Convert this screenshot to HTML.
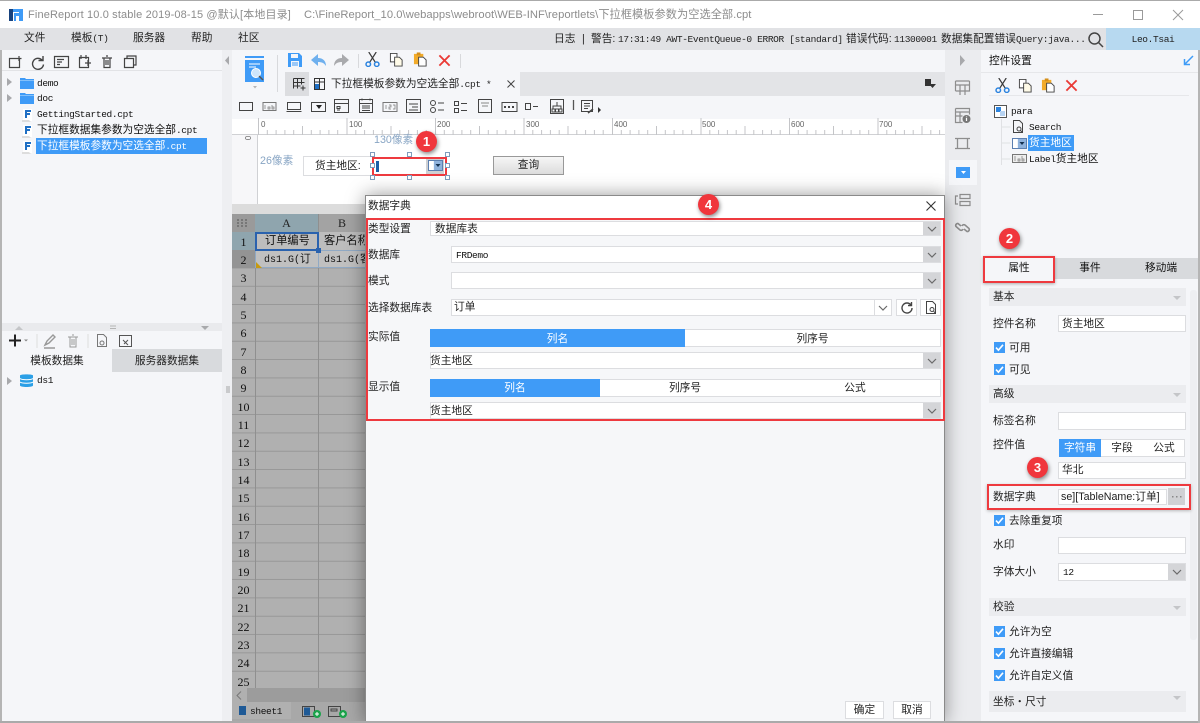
<!DOCTYPE html>
<html lang="zh"><head><meta charset="utf-8"><title>FineReport</title>
<style>
html,body{margin:0;padding:0}
body{width:1200px;height:723px;overflow:hidden;position:relative;background:#f5f6f9;font:10.7px/16px "Liberation Sans","Noto Sans CJK SC",sans-serif;color:#222}
.a{position:absolute;box-sizing:border-box}
.t{position:absolute;white-space:nowrap;line-height:16px;height:16px;font-family:"Liberation Sans","Noto Sans CJK SC",sans-serif;font-size:10.7px;color:#222}
.m{font-family:"Liberation Mono","Noto Sans CJK SC",monospace;font-size:9.5px;letter-spacing:-.35px}
.t.m{margin-top:1px}
.c{text-align:center}
.inp{position:absolute;box-sizing:border-box;background:#fff;border:1px solid #dcdde0}
.arr{position:absolute;background:#d4d5d8;right:0;top:0;bottom:0;width:17px}
.sec{position:absolute;left:989px;width:197px;background:#ebecef}
.num{position:absolute;left:232px;width:23px;text-align:center;font:12px/16px "Liberation Serif",serif;color:#111;height:16px}
.badge{position:absolute;width:21px;height:21px;border-radius:50%;background:#f0363c;color:#fff;font:bold 13px/21px "Liberation Sans",sans-serif;text-align:center;box-shadow:1px 2px 4px rgba(0,0,0,.45)}
.red{position:absolute;box-sizing:border-box;border:2px solid #ee3a3f}
.h{position:absolute;width:5px;height:5px;box-sizing:border-box;border:1px solid #7f9cbd;background:#fff}
.rl{font-size:8px;color:#666;top:117px}
svg{position:absolute;overflow:visible}
</style></head><body>
<svg width="0" height="0" style="position:absolute"><defs>
<symbol id="chev" viewBox="0 0 10 6"><path d="M1 1l4 4 4-4" fill="none" stroke="#6a6a6a" stroke-width="1.2"/></symbol>
<symbol id="chk" viewBox="0 0 11 11"><rect width="11" height="11" fill="#3f9bf7"/><path d="M2 5.6l2.4 2.6L9 2.8" fill="none" stroke="#fff" stroke-width="1.6"/></symbol>
<symbol id="cut" viewBox="0 0 16 16"><path d="M4 0l7 11M12 0L5 11" stroke="#3a3a3a" stroke-width="1.3" fill="none"/><circle cx="3.5" cy="13" r="2.4" fill="none" stroke="#2d84df" stroke-width="1.6"/><circle cx="12.5" cy="13" r="2.4" fill="none" stroke="#2d84df" stroke-width="1.6"/></symbol>
<symbol id="copy" viewBox="0 0 16 16"><path d="M1.500 1.500h7v9h-7z" fill="#fff" stroke="#444"/><path d="M6 5.500h5l3 3v6.500H6z" fill="#fffbe8" stroke="#444"/></symbol>
<symbol id="paste" viewBox="0 0 16 16"><path d="M1 2h10v11H1z" fill="#f2ab2a"/><path d="M4 0.500h4v3H4z" fill="#d68f18"/><path d="M6 5.500h5l3 3v6.500H6z" fill="#fff" stroke="#444"/></symbol>
<symbol id="del" viewBox="0 0 14 14"><path d="M1.500 1.500l11 11M12.500 1.500l-11 11" stroke="#ea3a36" stroke-width="2" fill="none"/></symbol>
<symbol id="fi" viewBox="0 0 12 14"><path d="M1 1h9v12H1z" fill="#fff"/><path d="M3 2h6v2H5v1h3v2H5v3H3z" fill="#1f6fc4"/><path d="M0 12h7l2 2H0z" fill="#ddd"/></symbol>
<symbol id="folder" viewBox="0 0 14 12"><path d="M0 1h5l1 1h8v10H0z" fill="#3f9bf7"/><path d="M0 3h14v1H0z" fill="#83c0fa"/></symbol>
<pattern id="tk" x="26" width="88.5" height="18" patternUnits="userSpaceOnUse"><path d="M.5 0v17M9.300 12v5M18.100 12v5M26.900 12v5M35.700 12v5M44.500 8v9M53.300 12v5M62.100 12v5M70.900 12v5M79.700 12v5" stroke="#c4c5c8" fill="none"/></pattern>
<pattern id="rw" y="250" width="10" height="18.33" patternUnits="userSpaceOnUse"><rect y="17.600" width="10" height="1.300" fill="#8f8f8f"/></pattern>
</defs></svg>

<!-- window frame / title bar -->
<div class="a" style="left:0;top:0;width:1200px;height:28px;background:#fff;border-top:1px solid #aaa"></div>
<svg style="left:9px;top:8px" width="14" height="14" viewBox="0 0 14 14"><path d="M0 1h4v12H0z" fill="#17427e"/><path d="M4 1h10v12h-4V8H7v5H5V5h5V4H4z" fill="#3f9bf7"/></svg>
<div class="t" style="left:28px;top:7px;color:#8c8c8c;font-size:11px;letter-spacing:.14px">FineReport 10.0 stable 2019-08-15 @默认[本地目录]</div>
<div class="t" style="left:304px;top:7px;color:#8c8c8c;font-size:11.2px;letter-spacing:.05px">C:\FineReport_10.0\webapps\webroot\WEB-INF\reportlets\下拉框模板参数为空选全部.cpt</div>
<svg style="left:1093px;top:9px" width="95" height="12" fill="none" stroke="#9a9a9a"><path d="M0 5.500h10"/><rect x="40.500" y="1.500" width="9" height="9"/><path d="M80 1l10 10M90 1L80 11"/></svg>

<!-- menu bar -->
<div class="a" style="left:0;top:28px;width:1200px;height:22px;background:#e1e2e5"></div>
<div class="t" style="left:24px;top:30px">文件</div>
<div class="t" style="left:71px;top:30px">模板<span class="m">(T)</span></div>
<div class="t" style="left:133px;top:30px">服务器</div>
<div class="t" style="left:191px;top:30px">帮助</div>
<div class="t" style="left:238px;top:30px">社区</div>
<div class="t" style="left:554px;top:31px">日志</div><div class="t" style="left:582px;top:31px">|</div><div class="t" style="left:591px;top:31px">警告:</div>
<div class="t m" style="left:618px;top:31px">17:31:49 AWT-EventQueue-0 ERROR [standard]</div>
<div class="t" style="left:846px;top:31px">错误代码:</div><div class="t m" style="left:894px;top:31px">11300001</div>
<div class="t" style="left:941px;top:31px">数据集配置错误</div><div class="t m" style="left:1016px;top:31px">Query:java...</div>
<svg style="left:1088px;top:32px" width="16" height="16" fill="none" stroke="#444" stroke-width="1.500"><circle cx="6.500" cy="6.500" r="5.500"/><path d="M10.500 10.500l4.500 4.500"/></svg>
<div class="a" style="left:1106px;top:28px;width:94px;height:22px;background:#b7d9f0"></div>
<div class="t m c" style="left:1106px;top:31px;width:94px">Leo.Tsai</div>

<!-- left panel -->
<div class="a" style="left:0;top:50px;width:2px;height:673px;background:#b5b5b5"></div>
<svg style="left:8px;top:54px" width="130" height="16" fill="none" stroke="#444" stroke-width="1.200">
<path d="M1.500 4.500h10v9h-10zM11 2v5M8.500 4.500h5"/>
<path d="M34 6a5.500 5.500 0 1 0 1.500 4.500M35 2v4.500h-4.500" stroke-width="1.400"/>
<path d="M46.500 2.500h14v11h-14zM49 5.500h7M49 8h5M49 10.500h3"/>
<path d="M71.500 3.500h9v10h-9zM73 1v4M78 1v4M77 9h6M80 6v6"/>
<path d="M94 4h10M96 4v9.500h6V4M98 2h2M98 6v5M100 6v5"/>
<path d="M116.500 4.500h9v9h-9zM119 4V2h9v9h-2"/>
</svg>
<div class="a" style="left:2px;top:70px;width:220px;height:1px;background:#e2e3e6"></div>
<svg style="left:7px;top:78px" width="6" height="25" fill="#a8a9ac"><path d="M0 0l5 4-5 4zM0 16l5 4-5 4z"/></svg>
<svg style="left:20px;top:77px" width="14" height="12"><use href="#folder"/></svg>
<svg style="left:20px;top:92px" width="14" height="12"><use href="#folder"/></svg>
<div class="t m" style="left:37px;top:75px;color:#111">demo</div>
<div class="t m" style="left:37px;top:90px;color:#111">doc</div>
<svg style="left:22px;top:108px" width="12" height="14"><use href="#fi"/></svg>
<svg style="left:22px;top:124px" width="12" height="14"><use href="#fi"/></svg>
<svg style="left:22px;top:140px" width="12" height="14"><use href="#fi"/></svg>
<div class="t m" style="left:37px;top:106px;color:#111">GettingStarted.cpt</div>
<div class="t" style="left:37px;top:122px;color:#111">下拉框数据集参数为空选全部<span class="m">.cpt</span></div>
<div class="a" style="left:36px;top:138px;width:171px;height:16px;background:#3f9bf7"></div>
<div class="t" style="left:37px;top:138px;color:#fff">下拉框模板参数为空选全部<span class="m">.cpt</span></div>

<div class="a" style="left:2px;top:323px;width:220px;height:8px;background:#e9eaed"></div>
<svg style="left:15px;top:325px" width="200" height="6"><path d="M0 5l4-4 4 4z" fill="#c4c5c8"/><path d="M95 1h6M95 3.500h6" stroke="#b5b5b5"/><path d="M186 1h8l-4 4z" fill="#a8a9ac"/></svg>
<svg style="left:8px;top:333px" width="130" height="16" fill="none" stroke="#aaa">
<path d="M1 7.500h12M7 1.500v12" stroke="#222" stroke-width="2"/><path d="M16 6.500h4l-2 2z" fill="#888" stroke="none"/>
<path d="M29 1v14" stroke="#ddd"/><path d="M37 12l2-4 6-6 2 2-6 6zM36 15h11" stroke="#999" stroke-width="1.400"/>
<path d="M60 4h10M62 4v10h6V4M64 2h2M64 6v6M66 6v6" stroke="#999"/><path d="M80 1v14" stroke="#ddd"/>
<path d="M89.500 1.500h6l3 3v9h-9z" stroke="#777"/><circle cx="94" cy="10" r="2" stroke="#777"/>
<path d="M111.500 2.500h12v11h-12zM115 7l5 5M120 7l-4 4" stroke="#555"/>
</svg>
<div class="a" style="left:2px;top:349px;width:110px;height:23px;background:#f5f6f9"></div>
<div class="a" style="left:112px;top:349px;width:110px;height:23px;background:#d8dadd"></div>
<div class="t c" style="left:2px;top:353px;width:110px">模板数据集</div>
<div class="t c" style="left:112px;top:353px;width:110px">服务器数据集</div>
<svg style="left:7px;top:377px" width="6" height="9" fill="#a8a9ac"><path d="M0 0l5 4-5 4z"/></svg>
<svg style="left:20px;top:373px" width="13" height="15"><path d="M0 2.500C0 1 13 1 13 2.500v10c0 2-13 2-13 0z" fill="#2b9fe6"/><path d="M0 5.500c2 1.600 11 1.600 13 0M0 9c2 1.600 11 1.600 13 0" stroke="#fff" fill="none"/></svg>
<div class="t m" style="left:37px;top:372px;color:#111">ds1</div>

<!-- splitter -->
<div class="a" style="left:222px;top:50px;width:10px;height:673px;background:#eeeff2"></div>
<svg style="left:225px;top:56px" width="5" height="10"><path d="M4 0v9L0 4.500z" fill="#a8a9ac"/></svg>
<div class="a" style="left:226px;top:386px;width:4px;height:7px;background:#c9cacc"></div>

<!-- centre toolbar -->
<div class="a" style="left:232px;top:50px;width:713px;height:46px;background:#f5f6f9"></div>
<svg style="left:245px;top:56px" width="20" height="36"><rect x="0" y="0" width="19" height="2" fill="#3f9bf7"/><path d="M0 4h19v22H0z" fill="#3f9bf7"/><path d="M4 8h11M4 11h7" stroke="#fff"/><circle cx="11" cy="17" r="4.500" fill="#cfe6fb" stroke="#fff"/><path d="M14 20l4 4" stroke="#555" stroke-width="1.500"/><path d="M8 30h4l-2 2.500z" fill="#b5b5b5"/></svg>
<div class="a" style="left:277px;top:55px;width:1px;height:37px;background:#d8d9dc"></div>
<svg style="left:288px;top:53px" width="14" height="14"><path d="M0 0h11l3 3v11H0z" fill="#3f9bf7"/><path d="M3 1h7v4H3zM3 8h8v6H3z" fill="#f5f6f9"/><path d="M4 10h6M4 12h6" stroke="#3f9bf7"/></svg>
<svg style="left:311px;top:53px" width="40" height="15"><path d="M7 1L0 7l7 6V9c4 0 6 1 8 4 0-5-3-8-8-8z" fill="#6fb0ee"/><path d="M31 1l7 6-7 6V9c-4 0-6 1-8 4 0-5 3-8 8-8z" fill="#a9aaad"/></svg>
<div class="a" style="left:358px;top:54px;width:1px;height:14px;background:#d8d9dc"></div>
<svg style="left:365px;top:52px" width="15" height="15"><use href="#cut"/></svg>
<svg style="left:389px;top:52px" width="15" height="15"><use href="#copy"/></svg>
<svg style="left:413px;top:52px" width="15" height="15"><use href="#paste"/></svg>
<svg style="left:438px;top:54px" width="13" height="13"><use href="#del"/></svg>
<div class="a" style="left:460px;top:54px;width:1px;height:14px;background:#d8d9dc"></div>

<!-- tab row -->
<div class="a" style="left:285px;top:72px;width:660px;height:24px;background:#e3e4e7"></div>
<div class="a" style="left:285px;top:72px;width:24px;height:24px;background:#dcdde0"></div>
<div class="a" style="left:309px;top:72px;width:211px;height:24px;background:#f5f6f9"></div>
<svg style="left:293px;top:78px" width="13" height="13" fill="none" stroke="#333"><path d="M.5 .5h11M.5 .5v10M4.500 .5v10M8.500 .5v6M.5 4.500h11M.5 8h7M10 7.500v5M7.500 10h5"/></svg>
<svg style="left:314px;top:78px" width="11" height="12"><path d="M.5 .5h10v11H.5zM.5 4h10M5.500 0v12" fill="none" stroke="#333"/><path d="M1 6h4v5H1z" fill="#1f6fc4"/></svg>
<div class="t" style="left:331px;top:76px">下拉框模板参数为空选全部<span class="m">.cpt *</span></div>
<svg style="left:507px;top:80px" width="8" height="8"><path d="M.5 .5l7 7M7.500 .5l-7 7" stroke="#444" fill="none"/></svg>
<svg style="left:925px;top:79px" width="11" height="10"><path d="M0 0h6v7H0z" fill="#333"/><path d="M4 5h7l-3.500 4z" fill="#333"/></svg>

<!-- widget toolbar -->
<svg style="left:239px;top:98px" width="360" height="18" fill="none" stroke="#444">
<rect x=".5" y="4.500" width="13" height="8"/>
<rect x="24" y="4.500" width="13" height="8" stroke="#777"/><path d="M26 7v4M29 9v2h2V9zM33 7v4h2V9h-2" stroke="#777" stroke-width=".7"/>
<path d="M48.500 4.500h13v7h-13zM47.500 13.500h15"/>
<path d="M72.500 4.500h14v9h-14z"/><path d="M77 7h6l-3 4z" fill="#222" stroke="none"/>
<path d="M95.500 1.500h14v13h-14zM95.500 5.500h14M98 8.500h3v2h-3zM98 12h3"/>
<path d="M120.500 1.500h13v13h-13zM120.500 5.500h13M123 8h8M123 10h8M123 12.500h8"/><path d="M123 .5v2M131 .5v2"/>
<rect x="144" y="4.500" width="14" height="9" stroke="#777"/><path d="M147 7v4M150 7h2v2h-2v2h2M154 7h2v4h-2" stroke="#777" stroke-width=".7"/>
<path d="M167.500 1.500h14v13h-14zM170 6h9M173 9h6M170 12h9"/>
<circle cx="194" cy="5" r="2.500"/><circle cx="194" cy="12" r="2.500"/><path d="M199 5h6M199 12h6"/>
<path d="M215.500 3.500h4v4h-4zM215.500 10.500h4v4h-4zM222 5.500h6M222 12.500h6"/>
<rect x="239.500" y="1.500" width="13" height="13"/><path d="M242 5h8M243 8h6" stroke="#888"/>
<rect x="263" y="4.500" width="15" height="9"/><path d="M265 9h2M269 9h2M273 9h2" stroke-width="2"/>
<path d="M286.500 5.500h5v6h-5zM294 8.500h5"/>
<rect x="311.500" y="1.500" width="13" height="14"/><path d="M318 4v4M314 11V8h8v3M313 11h3v3h-3zM316.500 11h3v3h-3zM320 11h3v3h-3z"/>
<path d="M334.500 2v10" stroke="#555" stroke-width="1.300"/>
<path d="M342.500 2.500h11v11h-11zM345 5.500h6M345 8h6M345 10.500h4"/><path d="M349 15l5-4" stroke-width="1.500"/>
<path d="M359 9l3 3-3 3z" fill="#333" stroke="none"/>
</svg>

<!-- ruler + param canvas -->
<div class="a" style="left:232px;top:119px;width:713px;height:16px;background:#fff;border-bottom:1px solid #d0d1d4"></div>
<svg style="left:232px;top:118px" width="713" height="18"><rect x="26" width="687" height="18" fill="url(#tk)"/></svg>
<div class="t rl" style="left:261px">0</div>
<div class="t rl" style="left:349px">100</div>
<div class="t rl" style="left:437px">200</div>
<div class="t rl" style="left:526px">300</div>
<div class="t rl" style="left:614px">400</div>
<div class="t rl" style="left:702px">500</div>
<div class="t rl" style="left:791px">600</div>
<div class="t rl" style="left:879px">700</div>
<div class="a" style="left:232px;top:135px;width:713px;height:70px;background:#fff"></div>
<div class="a" style="left:232px;top:135px;width:26px;height:70px;background:#f7f7f9;border-right:1px solid #d0d1d4"></div>
<div class="t" style="left:245px;top:130px;font-size:8px;color:#666;transform:rotate(90deg)">0</div>
<div class="a" style="left:232px;top:204px;width:713px;height:10px;background:#dcdcdc"></div>
<div class="t" style="left:374px;top:132px;color:#88a5c4;font-size:10.7px">130像素</div>
<div class="t" style="left:260px;top:153px;color:#88a5c4;font-size:10.7px">26像素</div>
<div class="a" style="left:303px;top:156px;width:69px;height:20px;background:#fff;border:1px solid #dcdde0;border-right:0"></div>
<div class="t" style="left:315px;top:158px">货主地区:</div>
<div class="a" style="left:376px;top:161px;width:3px;height:11px;background:#1f5fa8"></div>
<div class="a" style="left:426px;top:158px;width:18px;height:16px;background:#cfd0d3"></div>
<svg style="left:428px;top:160px" width="15" height="11"><rect x=".5" y=".5" width="14" height="10" fill="#dbe7f6" stroke="#5b7fb0"/><rect x="6" y="1" width="8" height="9" fill="#8fb2dc"/><path d="M7.500 4h5l-2.500 3z" fill="#13304f"/><rect x="1" y="1" width="4.500" height="9" fill="#fff"/></svg>
<div class="red" style="left:372px;top:157px;width:75px;height:19px"></div>
<div class="h" style="left:407px;top:152px"></div><div class="h" style="left:445px;top:152px"></div><div class="h" style="left:370px;top:152px"></div>
<div class="h" style="left:370px;top:163px"></div><div class="h" style="left:445px;top:163px"></div>
<div class="h" style="left:370px;top:175px"></div><div class="h" style="left:407px;top:175px"></div><div class="h" style="left:445px;top:175px"></div>
<div class="a" style="left:493px;top:156px;width:71px;height:19px;background:linear-gradient(#f6f6f6,#dcdcdc);border:1px solid #999"></div>
<div class="t c" style="left:493px;top:157px;width:71px">查询</div>

<!-- grid -->
<div class="a" style="left:232px;top:214px;width:133px;height:488px;background:#b0b0b0"></div>
<svg style="left:232px;top:214px" width="133" height="488" viewBox="232 214 133 488"><rect x="232" y="250" width="133" height="438" fill="url(#rw)"/><path d="M255.500 214v474M318.500 214v474" stroke="#8f8f8f"/></svg>
<div class="a" style="left:232px;top:214px;width:23px;height:18px;background:#9a9a9a"></div>
<div class="a" style="left:255px;top:214px;width:63px;height:18px;background:#8fa5ae"></div>
<div class="a" style="left:319px;top:214px;width:46px;height:18px;background:#a3a3a3"></div>
<svg style="left:237px;top:219px" width="12" height="8" fill="#777"><path d="M0 0h2v2H0zM4 0h2v2H4zM8 0h2v2H8zM0 3h2v2H0zM4 3h2v2H4zM8 3h2v2H8zM0 6h2v2H0zM4 6h2v2H4zM8 6h2v2H8z"/></svg>
<div class="t c" style="left:255px;top:215px;width:63px;font-family:'Liberation Serif',serif;font-size:12px">A</div>
<div class="t c" style="left:319px;top:215px;width:46px;font-family:'Liberation Serif',serif;font-size:12px">B</div>
<div class="a" style="left:232px;top:232px;width:23px;height:18px;background:#8fa5ae"></div>
<div class="a" style="left:232px;top:250px;width:23px;height:18px;background:#949494"></div>
<div class="a" style="left:255px;top:232px;width:110px;height:18px;background:#bdbdbd"></div>
<div class="a" style="left:255px;top:250px;width:110px;height:18px;background:#c0c0c0;border:1px solid #90a9c4;border-right:0"></div>
<div class="a" style="left:318px;top:250px;width:1px;height:18px;background:#90a9c4"></div>
<div class="t" style="left:265px;top:233px;color:#111;font-size:11.2px">订单编号</div>
<div class="t" style="left:324px;top:233px;width:41px;overflow:hidden;color:#111;font-size:11.2px">客户名称</div>
<div class="t" style="left:264px;top:251px;color:#111;width:54px;overflow:hidden"><span class="m" style="font-size:10px;letter-spacing:0">ds1.G(</span>订</div>
<div class="t" style="left:324px;top:251px;color:#111;width:41px;overflow:hidden"><span class="m" style="font-size:10px;letter-spacing:0">ds1.G(</span>客</div>
<svg style="left:256px;top:262px" width="6" height="6"><path d="M0 0l6 6H0z" fill="#c79a10"/></svg>
<div class="a" style="left:255px;top:232px;width:64px;height:19px;border:2px solid #2a62ae"></div>
<div class="a" style="left:316px;top:248px;width:5px;height:5px;background:#2a62ae"></div>
<div class="num" style="top:234px">1</div><div class="num" style="top:252px">2</div><div class="num" style="top:270px">3</div><div class="num" style="top:289px">4</div><div class="num" style="top:307px">5</div><div class="num" style="top:325px">6</div><div class="num" style="top:344px">7</div><div class="num" style="top:362px">8</div><div class="num" style="top:380px">9</div><div class="num" style="top:399px">10</div><div class="num" style="top:417px">11</div><div class="num" style="top:435px">12</div><div class="num" style="top:454px">13</div><div class="num" style="top:472px">14</div><div class="num" style="top:490px">15</div><div class="num" style="top:509px">16</div><div class="num" style="top:527px">17</div><div class="num" style="top:545px">18</div><div class="num" style="top:564px">19</div><div class="num" style="top:582px">20</div><div class="num" style="top:600px">21</div><div class="num" style="top:619px">22</div><div class="num" style="top:637px">23</div><div class="num" style="top:655px">24</div><div class="num" style="top:674px">25</div>
<div class="a" style="left:232px;top:688px;width:133px;height:14px;background:#9c9c9c"></div>
<div class="a" style="left:232px;top:688px;width:15px;height:14px;background:#b0b0b0"></div>
<svg style="left:236px;top:691px" width="6" height="9"><path d="M5 .5L1 4.500l4 4" fill="none" stroke="#777"/></svg>
<div class="a" style="left:232px;top:702px;width:133px;height:21px;background:#a8a8a8"></div>
<div class="a" style="left:232px;top:702px;width:59px;height:17px;background:#b0b0b0"></div>
<svg style="left:239px;top:706px" width="7" height="9"><path d="M0 0h7v9H0z" fill="#1f5a96"/></svg>
<div class="t m" style="left:250px;top:703px;color:#111">sheet1</div>
<svg style="left:302px;top:705px" width="46" height="14" fill="none" stroke="#444"><path d="M.5 1.500h12v10H.5z"/><path d="M2 2.500h6v8H2z" fill="#1f5a96" stroke="none"/><circle cx="15" cy="9" r="4" fill="#1aa34a" stroke="none"/><path d="M13 9h4M15 7v4" stroke="#fff"/><path d="M26.500 1.500h12v10h-12zM29 4h6v2h-6z"/><circle cx="41" cy="9" r="4" fill="#1aa34a" stroke="none"/><path d="M39 9h4M41 7v4" stroke="#fff"/></svg>

<!-- right strip -->
<div class="a" style="left:945px;top:50px;width:36px;height:673px;background:#ebecef"></div>
<svg style="left:960px;top:55px" width="6" height="12"><path d="M0 0l5 5.500-5 5.500z" fill="#a8a9ac"/></svg>
<svg style="left:955px;top:80px" width="16" height="16" fill="none" stroke="#8d8d8d" stroke-width="1.200"><path d="M.5 1h14M.5 1v10M.5 5h14v6H.5M5 5v10M10 5v10M14.500 1v4"/></svg>
<svg style="left:955px;top:108px" width="16" height="16" fill="none" stroke="#8d8d8d" stroke-width="1.200"><path d="M.5 .5h14v6M.5 .5v14h7M.5 4h14M5 4v10M.5 8h7"/><circle cx="11.500" cy="11" r="4" fill="#777" stroke="none"/><path d="M11.500 10v3M11.500 8.500v.8" stroke="#fff"/></svg>
<svg style="left:955px;top:136px" width="16" height="16" fill="none" stroke="#8d8d8d" stroke-width="1.300"><path d="M2.500 2.500h10v10h-10z"/><path d="M0 2.500h2M0 12.500h2M13 2.500h2M13 12.500h2"/></svg>
<div class="a" style="left:949px;top:160px;width:28px;height:25px;background:#f5f6f9"></div>
<div class="a" style="left:956px;top:167px;width:14px;height:11px;background:#3f9bf7"></div>
<svg style="left:961px;top:171px" width="5" height="4"><path d="M0 0h5L2.500 3z" fill="#fff"/></svg>
<svg style="left:955px;top:193px" width="16" height="14" fill="none" stroke="#8d8d8d" stroke-width="1.200"><path d="M5 1.500h10v4H5zM5 8.500h10v4H5zM3 3H.5v8H3"/></svg>
<svg style="left:955px;top:221px" width="16" height="15" fill="none" stroke="#8d8d8d" stroke-width="1.600"><path d="M6 5L3 2.500a2 2 0 0 0-2 3L5 9a2 2 0 0 0 3-1"/><path d="M7 5a2 2 0 0 1 3-1l4 3.500a2 2 0 0 1-2 3L9 8"/></svg>

<!-- modal (before right panel so its shadow falls only on the strip and grid) -->
<div class="a" style="left:365px;top:195px;width:580px;height:528px;background:#f6f7f9;border:1px solid #8a8a8a;border-bottom:0;box-shadow:0 0 18px rgba(0,0,0,.4)"></div>

<!-- right panel -->
<div class="a" style="left:981px;top:50px;width:219px;height:673px;background:#f5f6f9"></div>
<div class="a" style="left:981px;top:72px;width:219px;height:1px;background:#e6e7ea"></div>
<div class="t" style="left:989px;top:53px;color:#111">控件设置</div>
<svg style="left:1183px;top:55px" width="11" height="11"><path d="M10 1L2 9M1.500 4v5.500H7" fill="none" stroke="#3f9bf7" stroke-width="1.500"/></svg>
<svg style="left:995px;top:78px" width="15" height="15"><use href="#cut"/></svg>
<svg style="left:1018px;top:78px" width="15" height="15"><use href="#copy"/></svg>
<svg style="left:1041px;top:78px" width="15" height="15"><use href="#paste"/></svg>
<svg style="left:1065px;top:79px" width="13" height="13"><use href="#del"/></svg>
<div class="a" style="left:989px;top:95px;width:200px;height:1px;background:#e6e7ea"></div>
<svg style="left:994px;top:105px" width="35" height="62" fill="none"><rect x=".5" y=".5" width="12" height="12" fill="#fff" stroke="#555"/><rect x="2" y="2" width="5" height="5" fill="#2d84df"/><rect x="6" y="6" width="5" height="5" fill="#b7d3f2"/><path d="M7.500 14v46M7.500 22h9M7.500 38h9M7.500 54h9" stroke="#e0e1e4"/></svg>
<svg style="left:1013px;top:120px" width="12" height="14" fill="none" stroke="#444"><path d="M.5 .5h6l3 3v9H.5z"/><circle cx="6" cy="9" r="2"/><path d="M7.500 10.500l2 2"/></svg>
<svg style="left:1012px;top:138px" width="15" height="11"><rect x=".5" y=".5" width="14" height="10" fill="#dbe7f6" stroke="#5b7fb0"/><rect x="6" y="1" width="8" height="9" fill="#8fb2dc"/><path d="M7.500 4h5l-2.500 3z" fill="#13304f"/><rect x="1" y="1" width="4.500" height="9" fill="#fff"/></svg>
<svg style="left:1012px;top:154px" width="15" height="9"><rect x=".5" y=".5" width="14" height="8" fill="#eee" stroke="#777"/><path d="M3 2v5M6 5v2h2V5zM10 2v5h2V5h-2" stroke="#777" fill="none" stroke-width=".7"/></svg>
<div class="t m" style="left:1011px;top:103px;color:#111">para</div>
<div class="t m" style="left:1029px;top:119px;color:#111">Search</div>
<div class="a" style="left:1028px;top:135px;width:46px;height:16px;background:#3f9bf7"></div>
<div class="t" style="left:1029px;top:135px;color:#fff">货主地区</div>
<div class="t" style="left:1029px;top:151px;color:#111"><span class="m">Label</span>货主地区</div>

<div class="a" style="left:983px;top:258px;width:215px;height:21px;background:#d8dadd"></div>
<div class="a" style="left:983px;top:258px;width:72px;height:21px;background:#f5f6f9"></div>
<div class="t c" style="left:983px;top:260px;width:72px;color:#111">属性</div>
<div class="t c" style="left:1055px;top:260px;width:70px;color:#111">事件</div>
<div class="t c" style="left:1126px;top:260px;width:70px;color:#111">移动端</div>
<div class="red" style="left:983px;top:256px;width:72px;height:27px;box-shadow:0 1px 3px rgba(0,0,0,.3)"></div>

<div class="sec" style="top:288px;height:18px"></div><div class="t" style="left:993px;top:289px">基本</div>
<div class="sec" style="top:385px;height:18px"></div><div class="t" style="left:993px;top:386px">高级</div>
<div class="sec" style="top:598px;height:18px"></div><div class="t" style="left:993px;top:599px">校验</div>
<div class="sec" style="top:691px;height:21px"></div><div class="t" style="left:993px;top:694px">坐标・尺寸</div>
<svg style="left:1173px;top:296px" width="9" height="410" fill="#c4c5c8"><path d="M0 0h8l-4 4zM0 97h8l-4 4zM0 310h8l-4 4zM0 400h8l-4 4z"/></svg>
<div class="a" style="left:1190px;top:290px;width:7px;height:350px;background:#eeeff2;border-radius:3px"></div>

<div class="t" style="left:993px;top:316px">控件名称</div>
<div class="inp" style="left:1058px;top:315px;width:128px;height:17px"></div><div class="t" style="left:1062px;top:316px">货主地区</div>
<svg style="left:994px;top:342px" width="11" height="11"><use href="#chk"/></svg><div class="t" style="left:1009px;top:340px">可用</div>
<svg style="left:994px;top:364px" width="11" height="11"><use href="#chk"/></svg><div class="t" style="left:1009px;top:362px">可见</div>
<div class="t" style="left:993px;top:413px">标签名称</div>
<div class="inp" style="left:1058px;top:412px;width:128px;height:18px"></div>
<div class="t" style="left:993px;top:437px">控件值</div>
<div class="inp" style="left:1059px;top:439px;width:126px;height:18px"></div>
<div class="a" style="left:1059px;top:439px;width:42px;height:18px;background:#3f9bf7"></div>
<div class="t c" style="left:1059px;top:440px;width:42px;color:#fff">字符串</div>
<div class="t c" style="left:1101px;top:440px;width:42px">字段</div>
<div class="t c" style="left:1143px;top:440px;width:42px">公式</div>
<div class="inp" style="left:1058px;top:462px;width:128px;height:17px"></div><div class="t" style="left:1062px;top:462px">华北</div>

<div class="t" style="left:993px;top:489px">数据字典</div>
<div class="inp" style="left:1058px;top:489px;width:109px;height:16px;overflow:hidden"></div>
<div class="t" style="left:1061px;top:489px">se][TableName:订单]</div>
<div class="a" style="left:1168px;top:488px;width:17px;height:17px;background:#d0d1d4"></div>
<svg style="left:1172px;top:496px" width="10" height="2" fill="#888"><path d="M0 0h1.500v1.500H0zM4 0h1.500v1.500H4zM8 0h1.500v1.500H8z"/></svg>
<div class="red" style="left:987px;top:484px;width:204px;height:26px;box-shadow:0 1px 3px rgba(0,0,0,.25)"></div>

<svg style="left:994px;top:515px" width="11" height="11"><use href="#chk"/></svg><div class="t" style="left:1009px;top:513px">去除重复项</div>
<div class="t" style="left:993px;top:537px">水印</div>
<div class="inp" style="left:1058px;top:537px;width:128px;height:17px"></div>
<div class="t" style="left:993px;top:564px">字体大小</div>
<div class="inp" style="left:1058px;top:563px;width:128px;height:18px"><div class="arr"></div></div>
<svg style="left:1172px;top:569px" width="10" height="6"><use href="#chev"/></svg>
<div class="t m" style="left:1063px;top:564px;color:#111">12</div>
<svg style="left:994px;top:626px" width="11" height="11"><use href="#chk"/></svg><div class="t" style="left:1009px;top:624px">允许为空</div>
<svg style="left:994px;top:648px" width="11" height="11"><use href="#chk"/></svg><div class="t" style="left:1009px;top:646px">允许直接编辑</div>
<svg style="left:994px;top:670px" width="11" height="11"><use href="#chk"/></svg><div class="t" style="left:1009px;top:668px">允许自定义值</div>

<!-- modal content -->
<div class="a" style="left:366px;top:196px;width:578px;height:22px;background:#fff"></div>
<div class="t" style="left:368px;top:198px;color:#222">数据字典</div>
<svg style="left:926px;top:201px" width="10" height="10"><path d="M.5 .5l9 9M9.500 .5l-9 9" stroke="#333" fill="none" stroke-width="1.100"/></svg>

<div class="t" style="left:368px;top:221px">类型设置</div>
<div class="inp" style="left:430px;top:221px;width:511px;height:15px"><div class="arr"></div></div>
<div class="t" style="left:435px;top:221px">数据库表</div>
<div class="t" style="left:368px;top:247px">数据库</div>
<div class="inp" style="left:451px;top:246px;width:490px;height:17px"><div class="arr"></div></div>
<div class="t m" style="left:456px;top:247px;color:#111">FRDemo</div>
<div class="t" style="left:368px;top:273px">模式</div>
<div class="inp" style="left:451px;top:272px;width:490px;height:17px"><div class="arr"></div></div>
<div class="t" style="left:368px;top:300px">选择数据库表</div>
<div class="inp" style="left:451px;top:299px;width:441px;height:17px"></div>
<div class="a" style="left:874px;top:300px;width:1px;height:15px;background:#dcdde0"></div>
<div class="t" style="left:454px;top:299px">订单</div>
<div class="inp" style="left:896px;top:299px;width:21px;height:17px"></div>
<div class="inp" style="left:920px;top:299px;width:21px;height:17px"></div>
<svg style="left:901px;top:301px" width="12" height="13" fill="none" stroke="#444" stroke-width="1.400"><path d="M10 4a5 5 0 1 0 1 3M10.500 1v3.500H7"/></svg>
<svg style="left:926px;top:301px" width="11" height="13" fill="none" stroke="#444"><path d="M.5 .5h6l3 3v9H.5z"/><circle cx="6" cy="8.500" r="2"/><path d="M7.500 10l2 2.500"/></svg>
<div class="t" style="left:368px;top:329px">实际值</div>
<div class="inp" style="left:430px;top:329px;width:511px;height:18px"></div>
<div class="a" style="left:430px;top:329px;width:255px;height:18px;background:#3f9bf7"></div>
<div class="t c" style="left:430px;top:331px;width:255px;color:#fff">列名</div>
<div class="t c" style="left:685px;top:331px;width:255px">列序号</div>
<div class="inp" style="left:430px;top:352px;width:511px;height:17px"><div class="arr"></div></div>
<div class="t" style="left:430px;top:353px">货主地区</div>
<div class="t" style="left:368px;top:379px">显示值</div>
<div class="inp" style="left:430px;top:379px;width:511px;height:18px"></div>
<div class="a" style="left:430px;top:379px;width:170px;height:18px;background:#3f9bf7"></div>
<div class="t c" style="left:430px;top:380px;width:170px;color:#fff">列名</div>
<div class="t c" style="left:600px;top:380px;width:170px">列序号</div>
<div class="t c" style="left:770px;top:380px;width:170px">公式</div>
<div class="inp" style="left:430px;top:402px;width:511px;height:17px"><div class="arr"></div></div>
<div class="t" style="left:430px;top:403px">货主地区</div>
<svg style="left:927px;top:226px" width="10" height="6"><use href="#chev"/></svg>
<svg style="left:927px;top:252px" width="10" height="6"><use href="#chev"/></svg>
<svg style="left:927px;top:278px" width="10" height="6"><use href="#chev"/></svg>
<svg style="left:878px;top:305px" width="10" height="6"><use href="#chev"/></svg>
<svg style="left:927px;top:358px" width="10" height="6"><use href="#chev"/></svg>
<svg style="left:927px;top:408px" width="10" height="6"><use href="#chev"/></svg>
<div class="red" style="left:366px;top:218px;width:579px;height:203px"></div>

<div class="inp" style="left:845px;top:701px;width:39px;height:18px"></div><div class="t c" style="left:845px;top:702px;width:39px">确定</div>
<div class="inp" style="left:893px;top:701px;width:38px;height:18px"></div><div class="t c" style="left:893px;top:702px;width:38px">取消</div>

<div class="badge" style="left:416px;top:131px">1</div>
<div class="badge" style="left:999px;top:228px">2</div>
<div class="badge" style="left:1027px;top:457px">3</div>
<div class="badge" style="left:698px;top:194px">4</div>

<!-- window edges -->
<div class="a" style="left:0;top:721px;width:1200px;height:2px;background:#aaa"></div>
<div class="a" style="left:1198px;top:50px;width:2px;height:673px;background:#b5b5b5"></div>
</body></html>
